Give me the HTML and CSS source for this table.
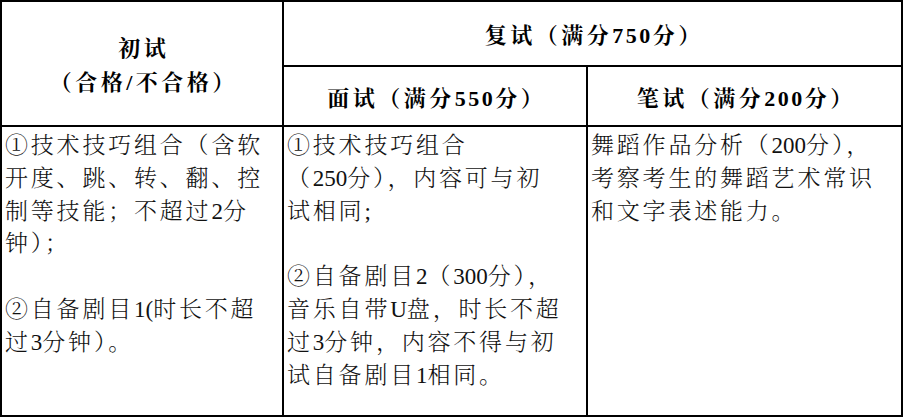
FILE: index.html
```html
<!DOCTYPE html>
<html lang="zh-CN">
<head>
<meta charset="utf-8">
<title>考试内容</title>
<link rel="stylesheet" href="styles.css">
</head>
<body>
<div class="sheet">
  <div class="cell head first"><span class="label">初试<br>（合格/不合格）</span></div>
  <div class="cell head span2 top"><span class="label">复试（满分<span class="hn">750</span>分）</span></div>
  <div class="cell head sub"><span class="label">面试（满分<span class="hn">550</span>分）</span></div>
  <div class="cell head sub"><span class="label">笔试（满分<span class="hn">200</span>分）</span></div>
  <div class="cell body">
    ①技术技巧组合（含软<br>
    开度、跳、转、翻、控<br>
    制等技能；不超过<span class="n">2</span>分<br>
    钟）；<br>
    <br>
    ②自备剧目<span class="n">1(</span>时长不超<br>
    过<span class="n">3</span>分钟）。
  </div>
  <div class="cell body">
    ①技术技巧组合<br>
    （<span class="n">250</span>分），内容可与初<br>
    试相同<span class="n">;</span><br>
    <br>
    ②自备剧目<span class="n">2</span>（<span class="n">300</span>分），<br>
    音乐自带<span class="n">U</span>盘，时长不超<br>
    过<span class="n">3</span>分钟，内容不得与初<br>
    试自备剧目<span class="n">1</span>相同。
  </div>
  <div class="cell body">
    舞蹈作品分析（<span class="n">200</span>分），<br>
    考察考生的舞蹈艺术常识<br>
    和文字表述能力。
  </div>
</div>
</body>
</html>
```
FILE: styles.css
```css
html, body {
  margin: 0;
  padding: 0;
  background: #ffffff;
}

body {
  font-family: "Liberation Serif", "Noto Serif CJK SC", "Noto Sans CJK SC", serif;
  color: #111111;
}

.sheet {
  display: grid;
  grid-template-columns: 282px 304px 315px;
  grid-template-rows: 65px 60px 290px;
  width: fit-content;
  border-top: 2px solid #000000;
  border-left: 2px solid #000000;
}

.cell {
  box-sizing: border-box;
  border-right: 2px solid #000000;
  border-bottom: 2px solid #000000;
  white-space: nowrap;
  overflow: hidden;
}

.head {
  display: flex;
  align-items: center;
  justify-content: center;
  text-align: center;
  font-weight: 700;
  font-size: 22px;
  letter-spacing: 3.5px;
  line-height: 34px;
  color: #000000;
  padding-top: 5px;
}

.head.first {
  grid-row: 1 / span 2;
  padding-top: 4px;
}

.label {
  display: block;
  margin-right: -3.5px;
}

.span2 {
  grid-column: 2 / span 2;
}

.hn {
  letter-spacing: 2.5px;
}

.body {
  font-size: 23px;
  font-weight: 300;
  letter-spacing: 2.8px;
  line-height: 32.8px;
  padding: 3px 2px 0 3px;
}

.n {
  letter-spacing: 0;
}
```
